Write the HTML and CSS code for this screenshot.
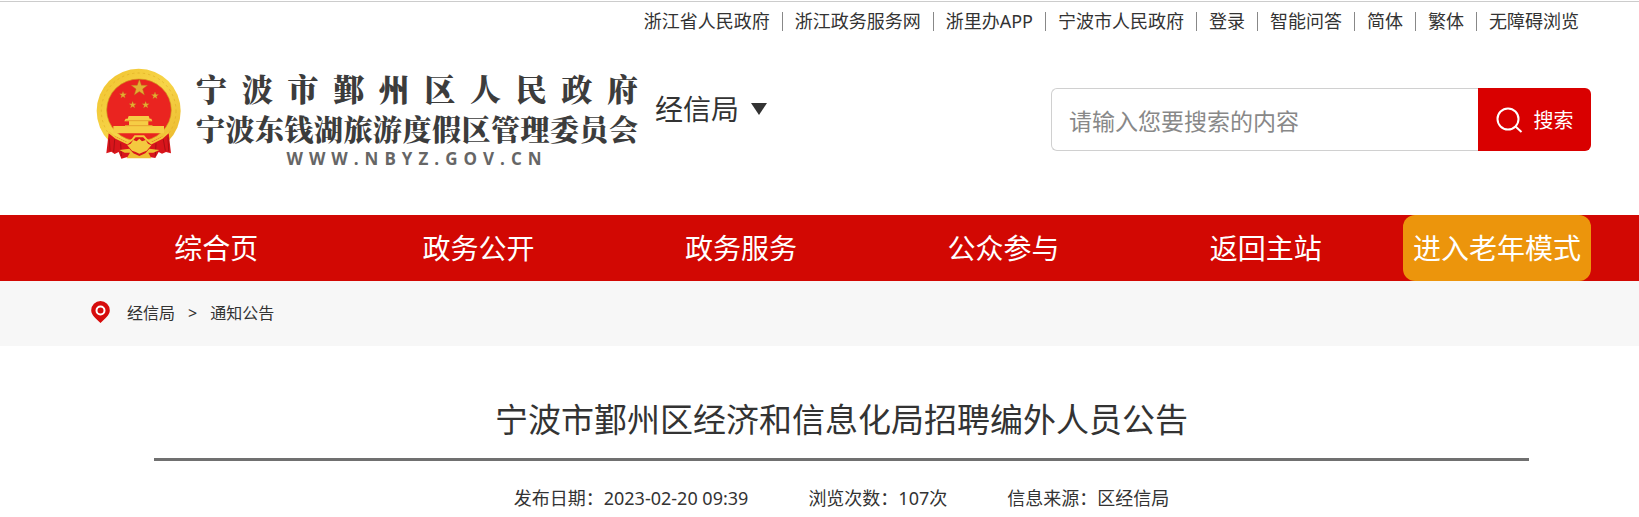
FILE: index.html
```html
<!DOCTYPE html>
<html lang="zh-CN">
<head>
<meta charset="utf-8">
<title>宁波市鄞州区经济和信息化局招聘编外人员公告</title>
<link rel="stylesheet" href="styles.css">
</head>
<body>
<header class="header">
  <nav class="topbar" aria-label="快捷链接">
    <a href="#">浙江省人民政府</a>
    <a href="#">浙江政务服务网</a>
    <a href="#">浙里办APP</a>
    <a href="#">宁波市人民政府</a>
    <a href="#">登录</a>
    <a href="#">智能问答</a>
    <a href="#">简体</a>
    <a href="#">繁体</a>
    <a href="#">无障碍浏览</a>
  </nav>
  <div class="masthead">
    <a class="brand" href="#">
      <svg class="emblem" viewBox="48 36 258 276" aria-hidden="true">
        <defs>
          <linearGradient id="gold" x1="0" y1="0" x2="1" y2="1">
            <stop offset="0" stop-color="#f0c22e"/>
            <stop offset=".5" stop-color="#f7d548"/>
            <stop offset="1" stop-color="#eab52a"/>
          </linearGradient>
          <path id="star" d="M0-10 2.4-3.2 9.5-3.1 3.8 1.2 5.9 8.1 0 4-5.9 8.1-3.8 1.2-9.5-3.1-2.4-3.2Z"/>
        </defs>
        <ellipse cx="176" cy="165" rx="126" ry="127" fill="url(#gold)"/>
        <ellipse cx="176" cy="165" rx="112" ry="114" fill="none" stroke="#d9a520" stroke-width="3" stroke-dasharray="7 9" opacity=".5"/>
        <ellipse cx="177" cy="162" rx="97" ry="93" fill="#ea2420" stroke="#d09a1e" stroke-width="2"/>
        <g fill="#e3ae32" stroke="#b5731a" stroke-width=".5">
          <use href="#star" transform="translate(178 96) scale(2.6)"/>
          <use href="#star" transform="translate(129 117) scale(1.15)"/>
          <use href="#star" transform="translate(225 119) scale(1.15)"/>
          <use href="#star" transform="translate(158 147) scale(1.15)"/>
          <use href="#star" transform="translate(197 147) scale(1.15)"/>
        </g>
        <path d="M146 180H206L209 188H214L217 196H205V208H217V210H252V232H100V210H135V208H147V196H133L137 188H143Z" fill="#f6cd45"/>
        <path d="M137 194H215M135 209H217" stroke="#dd8e24" stroke-width="2"/>
        <path d="M86 232 104 240 145 260 167 243H188L210 260 250 240 266 231 273 292 258 288 246 293 236 288 226 306 212 304 140 304 124 308 116 288 104 294 94 287 79 292Z" fill="#d8151b"/>
        <path d="M88 248 90 284M104 250 101 288M122 262 124 300M250 250 256 284M264 244 266 286M228 262 226 300" stroke="#a90f14" stroke-width="3" fill="none"/>
        <path d="M86 228 108 246 142 262 158 250 165 241H191L199 250 214 262 246 246 266 228" fill="none" stroke="#f3c63b" stroke-width="6"/>
        <path d="M142 268 152 263 160 252 170 256 178 248 186 256 197 252 204 263 214 268 200 284 190 288 178 293 167 288 156 284Z" fill="#f4c93f"/>
        <path d="M118 282 148 278 160 292 178 300 196 292 208 278 238 282 220 290 205 290 214 307H140L150 290H134Z" fill="#efbd34"/>
      </svg>
      <span class="brand-text">
        <span class="brand-line brand-line-wide">宁波市鄞州区人民政府</span>
        <span class="brand-line">宁波东钱湖旅游度假区管理委员会</span>
        <span class="brand-url">WWW.NBYZ.GOV.CN</span>
      </span>
    </a>
    <button class="dept" type="button">经信局
      <svg class="arrow" viewBox="0 0 16 12" aria-hidden="true"><path d="M0 0H16L8 12Z"/></svg>
    </button>
    <form class="search">
      <input class="search-input" type="text" aria-label="搜索内容" placeholder="请输入您要搜索的内容">
      <button class="search-button" type="button">
        <svg class="search-icon" viewBox="0 0 27 26" aria-hidden="true"><circle cx="12" cy="12" r="10.500"/><path d="M19.500 19.500 25.500 25"/></svg>
        搜索
      </button>
    </form>
  </div>
</header>
<nav class="mainnav" aria-label="主导航">
  <a class="nav-item" href="#">综合页</a>
  <a class="nav-item" href="#">政务公开</a>
  <a class="nav-item" href="#">政务服务</a>
  <a class="nav-item" href="#">公众参与</a>
  <a class="nav-item" href="#">返回主站</a>
  <a class="nav-elder" href="#">进入老年模式</a>
</nav>
<nav class="crumbs" aria-label="当前位置">
  <svg class="pin" viewBox="0 0 19 22" aria-hidden="true"><path fill="#d60c0c" d="M9.500 0A9.300 9.300 0 0 1 18.800 9.300C18.800 14.500 13.500 18 9.500 22C5.500 18 .2 14.500 .2 9.300A9.300 9.300 0 0 1 9.500 0Z"/><circle cx="9.500" cy="9.500" r="4" fill="none" stroke="#fff" stroke-width="2"/></svg>
  <a href="#">经信局</a>
  <span>&gt;</span>
  <a href="#">通知公告</a>
</nav>
<main class="article">
  <h1 class="title">宁波市鄞州区经济和信息化局招聘编外人员公告</h1>
  <div class="meta">
    <span>发布日期：2023-02-20 09:39</span>
    <span>浏览次数：107次</span>
    <span>信息来源：区经信局</span>
  </div>
</main>
</body>
</html>
```

FILE: styles.css
```css
* {
  box-sizing: border-box;
}

body {
  margin: 0;
  background: #fff;
  color: #333;
  font-family: "Noto Sans", "Noto Sans CJK SC", sans-serif;
  font-size: 18px;
}

a {
  color: inherit;
  text-decoration: none;
}

button,
input {
  font-family: inherit;
  margin: 0;
}

.header {
  margin-top: 1px;
  border-top: 1px solid #ccc;
}

.topbar {
  display: flex;
  justify-content: flex-end;
  padding: 10px 60px 0 0;
  line-height: 19px;
}

.topbar a + a {
  margin-left: 12px;
  padding-left: 12px;
  border-left: 1px solid #888;
}

.masthead {
  display: flex;
  align-items: flex-start;
  padding: 36px 48px 46px 96px;
}

.brand {
  display: flex;
}

.emblem {
  width: 86px;
  height: 94px;
}

.brand-text {
  display: flex;
  flex-direction: column;
  width: 442px;
  margin-left: 14px;
  color: #3c3c3c;
  font-family: "Noto Serif CJK SC", "Noto Sans CJK SC", serif;
  font-size: 29px;
  font-weight: 900;
  line-height: 41px;
  text-align-last: justify;
}

.brand-line-wide {
  font-size: 31px;
}

.brand-url {
  color: #666;
  font-family: "Open Sans", "Noto Sans", sans-serif;
  font-size: 17px;
  font-weight: 700;
  letter-spacing: 6px;
  line-height: 20px;
  text-align-last: center;
}

.dept {
  display: flex;
  align-items: center;
  gap: 12px;
  margin: 24px 0 0 17px;
  padding: 0;
  border: 0;
  background: none;
  color: #333;
  font-size: 28px;
  line-height: 36px;
}

.arrow {
  width: 16px;
  height: 12px;
  fill: #333;
}

.search {
  display: flex;
  width: 540px;
  height: 63px;
  margin: 21px 0 0 auto;
}

.search-input {
  flex: 1;
  min-width: 0;
  padding: 3px 17px 0;
  border: 1px solid #d0d0d0;
  border-right: 0;
  border-radius: 6px 0 0 6px;
  font-size: 23px;
}

.search-input::placeholder {
  color: #888;
}

.search-button {
  display: flex;
  align-items: center;
  justify-content: center;
  gap: 11px;
  width: 113px;
  padding: 0;
  border: 0;
  border-radius: 0 6px 6px 0;
  background: #d90000;
  color: #fff;
  font-size: 20px;
}

.search-icon {
  width: 27px;
  height: 26px;
  fill: none;
  stroke: #fff;
  stroke-width: 2;
}

.mainnav {
  display: flex;
  padding: 0 48px 0 85px;
  background: #d20803;
  color: #fff;
  font-size: 28px;
  line-height: 66px;
  text-align: center;
}

.nav-item {
  flex: 1;
}

.nav-elder {
  width: 188px;
  margin-left: 6px;
  border-radius: 12px;
  background: #ec950c;
}

.crumbs {
  display: flex;
  align-items: flex-start;
  gap: 13px;
  padding: 20px 91px;
  background: #f7f7f7;
  font-size: 16px;
  line-height: 25px;
}

.pin {
  width: 19px;
  height: 22px;
  margin-right: 4px;
}

.article {
  margin: 0 110px 0 154px;
}

.title {
  margin: 0;
  padding: 61px 0 25px;
  border-bottom: 3px solid #707070;
  font-size: 33px;
  font-weight: 400;
  line-height: 26px;
  text-align: center;
}

.meta {
  display: flex;
  justify-content: center;
  gap: 60px;
  padding-top: 24px;
  line-height: 26px;
}
```
